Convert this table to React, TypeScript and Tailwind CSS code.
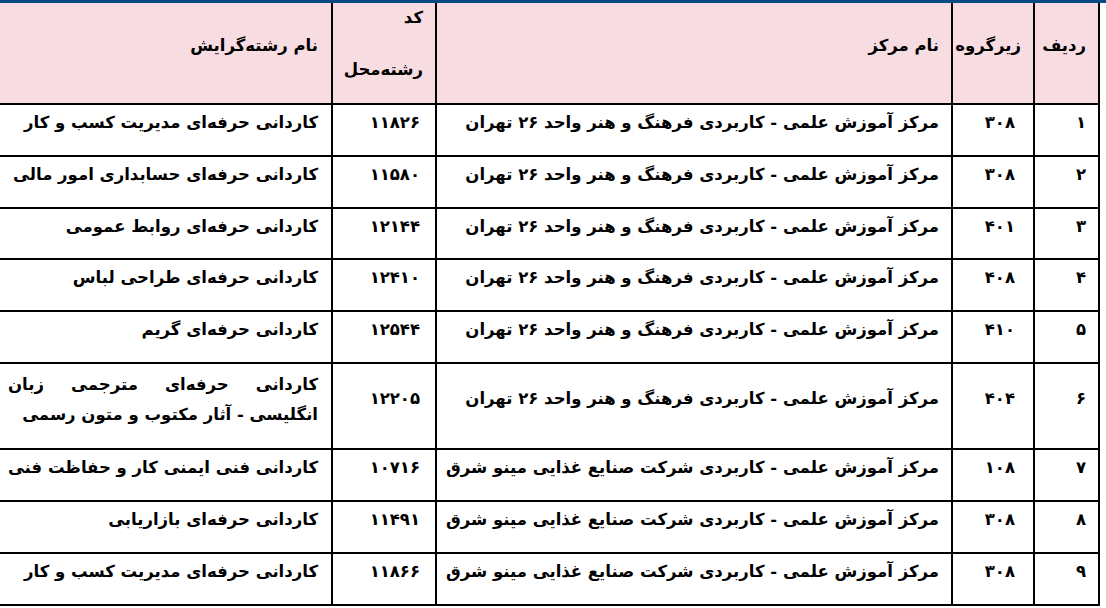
import React from 'react';

const TEHRAN = 'مرکز آموزش علمی - کاربردی فرهنگ و هنر واحد ۲۶ تهران';
const MINO = 'مرکز آموزش علمی - کاربردی شرکت صنایع غذایی مینو شرق';

type Row = {
  no: string;
  group: string;
  center: string;
  code: string;
  field: string;
  h: string;
  wrap?: boolean;
};

const rows: Row[] = [
  { no: '۱', group: '۳۰۸', center: TEHRAN, code: '۱۱۸۲۶', field: 'کاردانی حرفه‌ای مدیریت کسب و کار', h: 'h-[52px]' },
  { no: '۲', group: '۳۰۸', center: TEHRAN, code: '۱۱۵۸۰', field: 'کاردانی حرفه‌ای حسابداری امور مالی', h: 'h-[52px]' },
  { no: '۳', group: '۴۰۱', center: TEHRAN, code: '۱۲۱۴۴', field: 'کاردانی حرفه‌ای روابط عمومی', h: 'h-[51px]' },
  { no: '۴', group: '۴۰۸', center: TEHRAN, code: '۱۲۴۱۰', field: 'کاردانی حرفه‌ای طراحی لباس', h: 'h-[52px]' },
  { no: '۵', group: '۴۱۰', center: TEHRAN, code: '۱۲۵۴۴', field: 'کاردانی حرفه‌ای گریم', h: 'h-[52px]' },
  { no: '۶', group: '۴۰۴', center: TEHRAN, code: '۱۲۲۰۵', field: 'کاردانی حرفه‌ای مترجمی زبان انگلیسی - آثار مکتوب و متون رسمی', h: 'h-[86px]', wrap: true },
  { no: '۷', group: '۱۰۸', center: MINO, code: '۱۰۷۱۶', field: 'کاردانی فنی ایمنی کار و حفاظت فنی', h: 'h-[52px]' },
  { no: '۸', group: '۳۰۸', center: MINO, code: '۱۱۴۹۱', field: 'کاردانی حرفه‌ای بازاریابی', h: 'h-[52px]' },
  { no: '۹', group: '۳۰۸', center: MINO, code: '۱۱۸۶۶', field: 'کاردانی حرفه‌ای مدیریت کسب و کار', h: 'h-[52px]' },
];

const cols = 'grid grid-cols-[65px_82px_516px_104px_331px]';
const cell = 'flex items-center border-b-2 border-l-2 border-black pr-[12px] pb-[13px]';
const lastCell = 'flex items-center border-b-2 border-black pr-[13px] pl-[8px] pb-[13px]';

export default function App() {
  return (
    <div className="min-h-[608px] w-[1106px] bg-white font-['Tahoma','DejaVu_Sans',sans-serif] text-[16.5px] font-bold text-black">
      <div className="h-[3px] w-full bg-[#0a4a82]" />
      <div dir="rtl" className="w-[1100px] border-r-2 border-black">
        {/* Header */}
        <div className={`${cols} h-[102px] bg-[#f7dce2]`}>
          <div className={cell}>ردیف</div>
          <div className={cell}>زیرگروه</div>
          <div className={cell}>نام مرکز</div>
          <div className="flex flex-col justify-between border-b-2 border-l-2 border-black pr-[12px] pt-[3px] pb-[20px]">
            <span>کد</span>
            <span>رشته‌محل</span>
          </div>
          <div className={lastCell}>نام رشته‌گرایش</div>
        </div>

        {/* Body */}
        {rows.map((r) => (
          <div key={r.no} className={`${cols} ${r.h}`}>
            <div className={cell}>{r.no}</div>
            <div className={`${cell} pr-[18px]`}>{r.group}</div>
            <div className={`${cell} whitespace-nowrap`}>{r.center}</div>
            <div className={`${cell} pr-[15px]`}>{r.code}</div>
            <div className={`${lastCell} pb-[9px]`}>
              <p className={r.wrap ? 'w-full text-justify leading-[30px]' : 'whitespace-nowrap'}>{r.field}</p>
            </div>
          </div>
        ))}
      </div>
    </div>
  );
}
